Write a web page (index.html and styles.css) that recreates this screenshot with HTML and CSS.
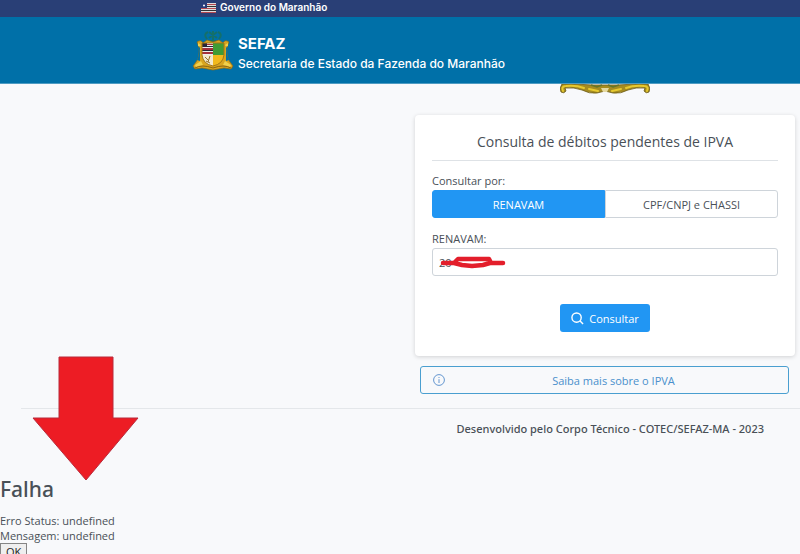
FILE: index.html
```html
<!DOCTYPE html>
<html lang="pt-BR">
<head>
<meta charset="utf-8">
<meta name="viewport" content="width=device-width, initial-scale=1">
<title>SEFAZ - Consulta de débitos pendentes de IPVA</title>
<link rel="stylesheet" href="styles.css">
</head>
<body>
<div class="gov-bar">
  <svg class="flag" viewBox="0 0 15 10" aria-hidden="true">
    <path fill="#ddd" d="M0 0h15v10H0z"/>
    <path fill="#b4474f" d="M0 1h15v1H0zM0 5h15v1H0zM0 9h15v1H0z"/>
    <path fill="#333" d="M0 3h15v1H0zM0 7h15v1H0z"/>
    <path fill="#273c7a" d="M0 0h6v5H0z"/>
    <circle cx="3" cy="2.5" r="1" fill="#fff"/>
  </svg>
  <span>Governo do Maranhão</span>
</div>
<header class="site-header">
  <svg class="crest" viewBox="0 0 42 42" aria-hidden="true">
    <g fill="none" stroke="#14706a" stroke-width="2">
      <path d="M15 10q-4-5 1-7M27 10q4-5-1-7M21 12V2M17 9l8-6M25 9l-8-6M14 12h14"/>
    </g>
    <path fill="#d9a520" stroke="#8a6a17" stroke-width=".7" d="M5 13q4-3 6 1l4-3 6 2 6-2 4 3q2-4 6-1l-2 5q-1 10 3 15l3 4-2 3-7-1-11 2-11-2-7 1-2-3 3-4q4-5 3-15z"/>
    <path fill="#0070a8" d="M7 19q1 6-2 12l3 1V18zM35 19q-1 6 2 12l-3 1V18z"/>
    <path fill="#f0d04c" d="M6 14l3 2q-1 2-3 1zM36 14l-3 2q1 2 3 1zM3 36l6-4 2 4-7 2zM39 36l-6-4-2 4 7 2z"/>
    <path fill="#eee" d="M10 14h11v12H10z"/>
    <path fill="#a5303b" d="M10 19h11v2H10zM10 23h11v2H10zM15 15h6v1h-6z"/>
    <path fill="#262637" d="M10 14h5v4h-5zM15 17h6v1h-6zM10 21h11v1H10z"/>
    <path fill="#3f9b35" d="M21 14h11v12H21z"/>
    <path fill="#f2e9cf" d="M10 26h11v11q-10-2-11-11z"/>
    <path fill="#f1b91c" d="M21 26h11q-1 9-11 11z"/>
    <path fill="none" stroke="#94702a" d="M13 28l3 3M18 27l-2 6M14 32l4 2"/>
    <path fill="none" stroke="#a47717" d="M10 14h22v12q-1 9-11 11-10-2-11-11z"/>
    <path fill="none" stroke="#8d6511" d="M3 39q7-4 18 0 11-4 18 0"/>
  </svg>
  <div class="brand">
    <strong class="brand-name">SEFAZ</strong>
    <span class="brand-desc">Secretaria de Estado da Fazenda do Maranhão</span>
  </div>
</header>
<main class="content">
  <div class="panel">
    <svg class="ornament" viewBox="0 0 90 10" aria-hidden="true">
      <path fill="#a58c20" stroke="#6b5a16" stroke-width=".8" d="M2 0h13l17 1h26l17-1h13q3 4 1 8-3 2-5-1l1-3q-9-1-17 2-7 4-15 3l-8-2-8 2q-8 1-15-3-8-3-17-2l1 3q-2 3-5 1-2-4 1-8z"/>
      <path fill="none" stroke="#e6c92f" stroke-width="2" stroke-linecap="round" d="M3 7q-2-5 3-5 10-1 18 2M87 7q2-5-3-5-10-1-18 2M29 5l9 2M61 5l-9 2"/>
      <path fill="none" stroke="#65752a" stroke-width="1.5" d="M31 1l6 2 5-2M59 1l-6 2-5-2"/>
      <path fill="#e5d9a0" d="M41 4h8l-2 4h-4z"/>
    </svg>
    <form class="card">
      <h1 class="card-title">Consulta de débitos pendentes de IPVA</h1>
      <span class="label" id="mode-label">Consultar por:</span>
      <div class="segmented" role="group" aria-labelledby="mode-label">
        <button class="segment segment-active" type="button" aria-pressed="true">RENAVAM</button>
        <button class="segment" type="button" aria-pressed="false">CPF/CNPJ e CHASSI</button>
      </div>
      <label class="label" for="renavam">RENAVAM:</label>
      <div class="field">
        <input class="input" id="renavam" type="text" value="20">
        <svg class="scribble" viewBox="0 0 68 14" aria-hidden="true">
          <path fill="none" stroke="#e31e2b" stroke-width="4.500" stroke-linecap="round" stroke-linejoin="round" d="M4 8h11l4-4h31l2 4h12H51l-7 2-11 1-10-1-8-2"/>
        </svg>
      </div>
      <button class="submit" type="button">
        <svg class="search-icon" viewBox="0 0 14 14" aria-hidden="true"><circle cx="6" cy="6" r="5"/><path d="M9.500 9.500L13 13"/></svg>
        <span>Consultar</span>
      </button>
    </form>
    <button class="more" type="button">
      <svg class="info-icon" viewBox="0 0 12 12" aria-hidden="true"><circle cx="6" cy="6" r="5.400"/><path d="M6 5.200V9M6 3v1"/></svg>
      <span class="more-text">Saiba mais sobre o IPVA</span>
    </button>
  </div>
</main>
<footer class="footer">Desenvolvido pelo Corpo Técnico - COTEC/SEFAZ-MA - 2023</footer>
<section class="failure">
  <h2 class="failure-title">Falha</h2>
  <p class="failure-text">Erro Status: undefined<br>Mensagem: undefined</p>
  <button class="ok" type="button">OK</button>
</section>
<svg class="arrow" viewBox="0 0 108 126" aria-hidden="true"><path fill="#ed1c24" stroke="#b92b3b" stroke-width="1" stroke-linejoin="round" d="M27 1h54v61h25L54 124 1 62h26z"/></svg>
</body>
</html>
```
FILE: styles.css
```css
* { box-sizing: border-box; }

body {
  position: relative;
  height: 100vh;
  margin: 0;
  overflow: hidden;
  background: #f8f9fb;
  color: #495057;
  font: 11px/16px "Open Sans", "Noto Sans", sans-serif;
}

button, input { font: inherit; }

.gov-bar {
  display: flex;
  align-items: center;
  gap: 4px;
  height: 17px;
  padding: 0 24px 2px 201px;
  background: #293f76;
  color: #fff;
  font: 600 10px/15px Inter, sans-serif;
}

.flag { width: 15px; height: 10px; }

.site-header {
  display: flex;
  align-items: center;
  gap: 4px;
  height: 67px;
  padding-left: 192px;
  background: #0070a8;
  color: #fff;
  border-bottom: 1px solid #4e9bc2;
}

.crest { width: 42px; height: 42px; }

.brand { display: flex; flex-direction: column; padding-top: 8px; font-family: Inter, sans-serif; }
.brand-name { font-size: 15px; line-height: 20px; }
.brand-desc { font-size: 12px; line-height: 20px; font-weight: 500; }

.content {
  display: flex;
  justify-content: flex-end;
  margin-left: 21px;
  padding-right: 5px;
  padding-bottom: 14px;
  border-bottom: 1px solid #e4e7ea;
}

.panel { display: flex; flex-direction: column; flex: 0 1 380px; }

.ornament { align-self: center; width: 90px; height: 10px; }

.card {
  display: flex;
  flex-direction: column;
  margin-top: 21px;
  padding: 17px 17px 24px;
  background: #fff;
  border-radius: 4px;
  box-shadow: 0 1px 4px rgba(0, 0, 0, 0.16);
}

.card-title {
  margin: 0 0 12px;
  padding-bottom: 8px;
  border-bottom: 1px solid #dee2e6;
  font-size: 14px;
  line-height: 20px;
  font-weight: 500;
  text-align: center;
}

.label { padding-bottom: 1px; }

.segmented { display: flex; margin-bottom: 13px; }

.segment {
  flex: 1;
  height: 28px;
  padding: 2px 0 0;
  background: #fff;
  border: 1px solid #ced4da;
  border-radius: 0 3px 3px 0;
  color: #495057;
}

.segment-active {
  background: #2196f3;
  border-color: #2196f3;
  border-radius: 3px 0 0 3px;
  color: #fff;
}

.field { position: relative; }

.input {
  display: block;
  width: 100%;
  height: 28px;
  padding: 0 6px;
  background: #fff;
  border: 1px solid #ced4da;
  border-radius: 3px;
  color: #495057;
}

.scribble { position: absolute; left: 7px; top: 7px; width: 68px; height: 14px; }

.submit {
  display: flex;
  align-items: center;
  justify-content: center;
  align-self: center;
  gap: 5px;
  height: 28px;
  margin-top: 28px;
  padding: 0 11px;
  background: #2196f3;
  border: 0;
  border-radius: 3px;
  color: #fff;
}

.submit span { padding-top: 2px; }

.search-icon { width: 13px; height: 13px; fill: none; stroke: #fff; stroke-width: 1.5; }

.more {
  display: flex;
  align-items: center;
  gap: 6px;
  height: 28px;
  margin: 10px 6px 0 5px;
  padding: 0 12px;
  background: transparent;
  border: 1px solid #4a9fd0;
  border-radius: 3px;
  color: #4a90cc;
}

.info-icon { width: 12px; height: 12px; fill: none; stroke: #6496cf; }
.more-text { flex: 1; padding-top: 2px; }

.footer {
  padding: 12px 36px 0;
  font-family: "Noto Sans", sans-serif;
  font-weight: 500;
  text-align: right;
}

.failure { padding-top: 38px; }

.failure-title {
  margin: 0 0 10px;
  font: 500 21px/28px "Noto Sans", sans-serif;
}

.failure-text { margin: 0; line-height: 15px; }

.ok {
  display: block;
  padding: 0 5px;
  background: #efefef;
  border: 1px solid #858585;
  color: #222;
}

.arrow { position: absolute; left: 32px; top: 356px; width: 108px; height: 126px; }
```
